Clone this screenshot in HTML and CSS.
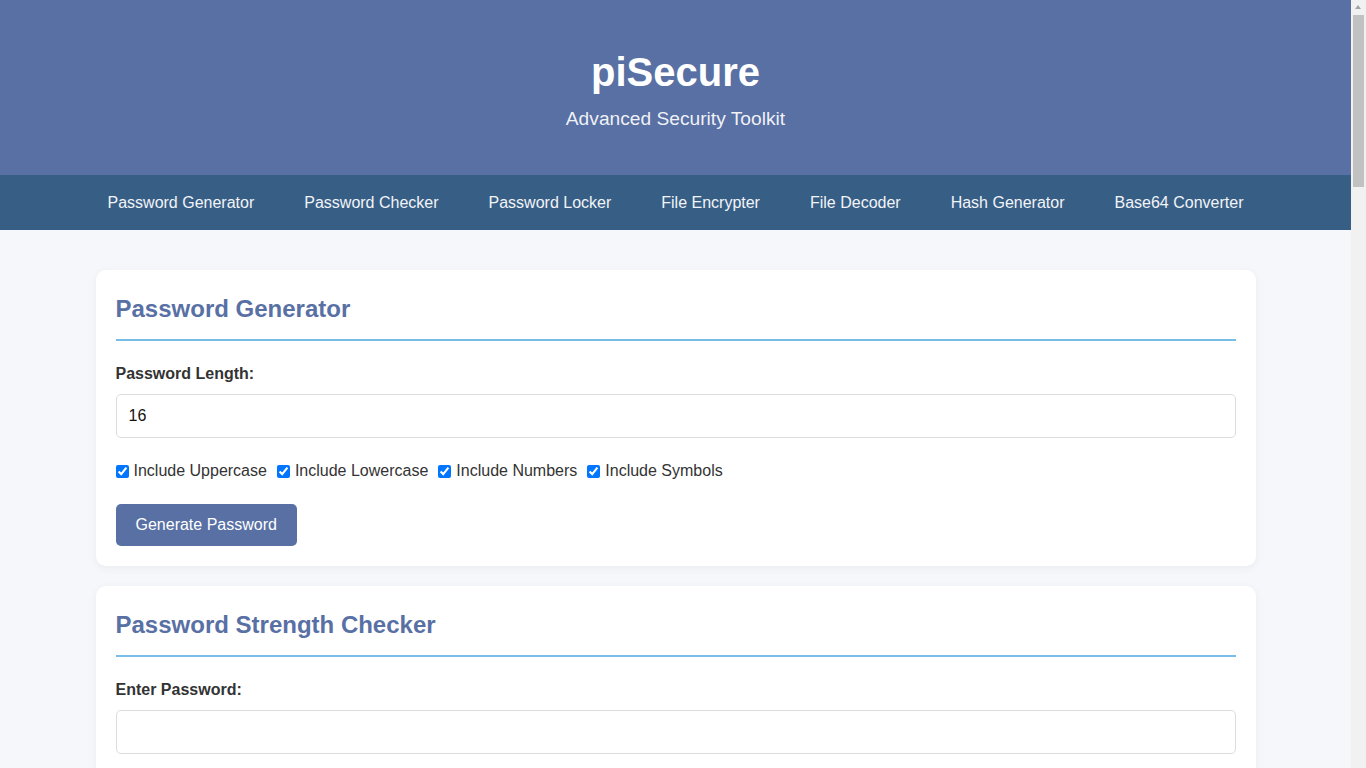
FILE: index.html
```html
<!DOCTYPE html>
<html lang="en">
<head>
<meta charset="utf-8">
<title>piSecure - Advanced Security Toolkit</title>
<link rel="stylesheet" href="styles.css">
</head>
<body>
<header class="site-header">
  <h1 class="site-title">piSecure</h1>
  <p class="site-subtitle">Advanced Security Toolkit</p>
</header>
<nav class="site-nav">
  <a href="#generator">Password Generator</a>
  <a href="#checker">Password Checker</a>
  <a href="#locker">Password Locker</a>
  <a href="#encrypter">File Encrypter</a>
  <a href="#decoder">File Decoder</a>
  <a href="#hash">Hash Generator</a>
  <a href="#base64">Base64 Converter</a>
</nav>
<main class="container">
  <section class="card" id="generator">
    <h2 class="card-title">Password Generator</h2>
    <label class="field-label" for="len">Password Length:</label>
    <input class="text-input" id="len" type="number" value="16">
    <div class="checks">
      <label class="check"><input type="checkbox" checked>Include Uppercase</label>
      <label class="check"><input type="checkbox" checked>Include Lowercase</label>
      <label class="check"><input type="checkbox" checked>Include Numbers</label>
      <label class="check"><input type="checkbox" checked>Include Symbols</label>
    </div>
    <button class="btn" type="button">Generate Password</button>
  </section>
  <section class="card" id="checker">
    <h2 class="card-title">Password Strength Checker</h2>
    <label class="field-label" for="pw">Enter Password:</label>
    <input class="text-input" id="pw" type="password">
    <button class="btn spaced" type="button">Check Strength</button>
  </section>
  <section class="card" id="locker">
    <h2 class="card-title">Password Locker</h2>
    <label class="field-label" for="site">Website:</label>
    <input class="text-input" id="site" type="text">
    <button class="btn spaced" type="button">Save Password</button>
  </section>
</main>
<div class="scroll-rail" aria-hidden="true">
  <span class="scroll-arrow"></span>
  <span class="scroll-thumb"></span>
</div>
</body>
</html>
```
FILE: styles.css
```css
html {
  background: #f1f1f1;
}
html, body {
  padding: 0;
  margin: 0;
}
body {
  margin-right: 15px;
  min-height: 100vh;
  font-family: "Liberation Sans", Arial, sans-serif;
  background: #f5f7fa;
  color: #333;
}
.scroll-rail {
  position: fixed;
  top: 0;
  right: 0;
  width: 15px;
  height: 100vh;
  background: #f1f1f1;
}
.scroll-arrow {
  position: absolute;
  top: 5px;
  left: 4px;
  width: 0;
  height: 0;
  border-left: 3.5px solid transparent;
  border-right: 3.5px solid transparent;
  border-bottom: 4px solid #a3a3a3;
}
.scroll-thumb {
  position: absolute;
  top: 15px;
  left: 2px;
  width: 11px;
  height: 172px;
  background: #c1c1c1;
}
.site-header {
  background: #5870a4;
  color: #fff;
  text-align: center;
  padding: 49px 20px 45px;
}
.site-title {
  margin: 0 0 13px;
  font-size: 40px;
  line-height: 46px;
  font-weight: bold;
}
.site-subtitle {
  margin: 0;
  font-size: 19.2px;
  line-height: 22px;
  color: rgba(255, 255, 255, 0.92);
}
.site-nav {
  background: #375e85;
  display: flex;
  justify-content: center;
  flex-wrap: wrap;
}
.site-nav a {
  color: #f2f4f8;
  text-decoration: none;
  font-size: 16px;
  line-height: 18px;
  padding: 19px 25px 18px;
}
.container {
  max-width: 1160px;
  margin: 0 auto;
  padding: 40px 0 20px;
}
.card {
  background: #fff;
  border-radius: 10px;
  box-shadow: 0 2px 10px rgba(0, 0, 0, 0.05);
  padding: 20px;
  margin-bottom: 20px;
}
.card-title {
  margin: 4px 0 24px;
  font-size: 24px;
  line-height: 28px;
  color: #5870a4;
  padding-top: 1px;
  padding-bottom: 16px;
  border-bottom: 2px solid #78bde7;
}
.field-label {
  display: block;
  font-weight: bold;
  font-size: 16px;
  line-height: 18px;
  margin-bottom: 11px;
  color: #333;
}
.text-input {
  display: block;
  box-sizing: border-box;
  width: 100%;
  height: 44px;
  padding: 12px;
  border: 1px solid #ddd;
  border-radius: 5px;
  font-family: "Liberation Sans", Arial, sans-serif;
  font-size: 16px;
  color: #111;
  background: #fff;
}
.checks {
  display: flex;
  gap: 10px;
  margin: 24px 0;
  font-size: 16px;
  line-height: 18px;
}
.check {
  display: flex;
  align-items: center;
  color: #333;
}
.check input {
  margin: 0 5px 0 0;
  width: 13px;
  height: 13px;
}
.btn {
  background: #5870a4;
  color: #fff;
  border: none;
  border-radius: 5px;
  font-family: "Liberation Sans", Arial, sans-serif;
  font-size: 16px;
  line-height: 18px;
  padding: 12px 20px;
  cursor: pointer;
}
.btn.spaced {
  margin-top: 24px;
}
```
